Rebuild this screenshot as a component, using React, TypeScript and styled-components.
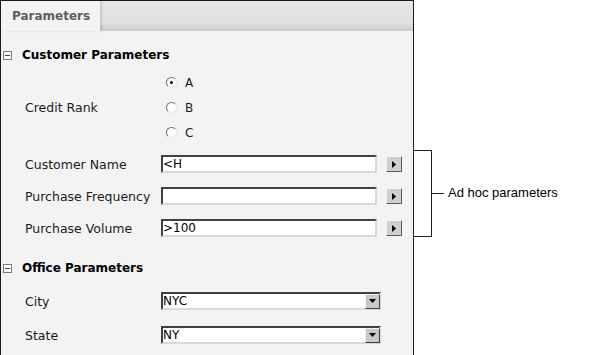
import React from "react";
import styled, { createGlobalStyle } from "styled-components";

const Global = createGlobalStyle`
  html, body { margin: 0; padding: 0; background: #ffffff; }
  body { font-family: "DejaVu Sans", Verdana, sans-serif; }
`;

const Page = styled.div`
  display: flex;
  align-items: flex-start;
  width: 613px;
  height: 355px;
  overflow: hidden;
`;

const Panel = styled.div`
  width: 412px;
  height: 360px;
  border: 1px solid #1a1a1a;
  border-bottom: none;
  background: #f3f3f3;
  display: flex;
  flex-direction: column;
  flex-shrink: 0;
`;

const TabBar = styled.div`
  display: flex;
  height: 30px;
  background: linear-gradient(#e6e6e6 0px, #e0e0e0 22px, #d4d4d4 26px, #cbcbcb 30px);
`;

const Tab = styled.div`
  width: 99px;
  background: #f3f3f3;
  color: #5e5e5e;
  font-weight: bold;
  font-size: 12px;
  display: flex;
  align-items: center;
  padding-left: 11px;
  box-sizing: border-box;
  box-shadow: 2px 0 2px rgba(0, 0, 0, 0.12);
  position: relative;
  z-index: 1;
`;

const SectionHeader = styled.div<{ $top: number }>`
  display: flex;
  align-items: center;
  height: 24px;
  margin-top: ${(p) => p.$top}px;
  padding-left: 2px;
  font-weight: bold;
  font-size: 12px;
  color: #000;
  gap: 10px;
`;

const MinusBox = styled.span`
  width: 7px;
  height: 7px;
  border: 1px solid #7a7a7a;
  background: #fff;
  position: relative;
  &::after {
    content: "";
    position: absolute;
    left: 1px;
    right: 1px;
    top: 3px;
    height: 1px;
    background: #444;
  }
`;

const FormRow = styled.div<{ $h: number }>`
  display: grid;
  grid-template-columns: 136px 1fr;
  align-items: center;
  height: ${(p) => p.$h}px;
  padding-left: 24px;
  font-size: 12px;
  color: #1a1a1a;
`;

const Label = styled.span`
  white-space: nowrap;
  font-size: 12.5px;
`;

const RadioGroup = styled.div`
  display: flex;
  flex-direction: column;
`;

const RadioRow = styled.div`
  display: flex;
  align-items: center;
  height: 25px;
  padding-left: 5px;
  gap: 8px;
  font-size: 12px;
`;

const RadioCircle = styled.span<{ $on?: boolean }>`
  width: 9px;
  height: 9px;
  border-radius: 50%;
  border: 1px solid;
  border-color: #6f6f6f #e8e8e8 #e8e8e8 #6f6f6f;
  background: #fff;
  display: flex;
  align-items: center;
  justify-content: center;
  &::after {
    content: "";
    width: 3px;
    height: 3px;
    border-radius: 50%;
    background: ${(p) => (p.$on ? "#000" : "transparent")};
  }
`;

const Control = styled.div`
  display: flex;
  align-items: center;
  gap: 9px;
`;

const TextBox = styled.div`
  width: 212px;
  height: 14px;
  border: 2px solid;
  border-color: #404040 #d8d8d8 #d8d8d8 #404040;
  background: #fff;
  font-size: 12px;
  line-height: 14px;
  color: #000;
`;

const ArrowButton = styled.div`
  width: 14px;
  height: 14px;
  border: 1px solid;
  border-color: #f6f6f6 #5a5a5a #5a5a5a #f6f6f6;
  background: #cfcfcf;
  display: flex;
  align-items: center;
  justify-content: center;
`;

const Select = styled.div`
  width: 216px;
  height: 14px;
  border: 2px solid;
  border-color: #404040 #d8d8d8 #d8d8d8 #404040;
  background: #fff;
  display: flex;
  align-items: center;
  justify-content: space-between;
  font-size: 12px;
  color: #000;
`;

const SelectButton = styled.div`
  width: 13px;
  height: 13px;
  border: 1px solid;
  border-color: #f2f2f2 #404040 #404040 #f2f2f2;
  background: #c8c8c8;
  display: flex;
  align-items: center;
  justify-content: center;
  margin-right: -1px;
`;

const Annotation = styled.div`
  display: flex;
  align-items: center;
  margin-top: 150px;
`;

const Bracket = styled.div`
  width: 17px;
  height: 85px;
  border: 1px solid #222;
  border-left: none;
`;

const Tick = styled.div`
  width: 12px;
  height: 1px;
  background: #222;
  margin-right: 4px;
`;

const AnnotationText = styled.span`
  font-family: "Liberation Sans", Arial, sans-serif;
  font-size: 13px;
  color: #000;
  margin-top: -2px;
`;

const RightTri = () => (
  <svg width="4" height="7" viewBox="0 0 4 7">
    <path d="M0 0 L4 3.5 L0 7 Z" fill="#000" />
  </svg>
);

const DownTri = () => (
  <svg width="7" height="4" viewBox="0 0 7 4">
    <path d="M0 0 L7 0 L3.5 4 Z" fill="#000" />
  </svg>
);

const adHoc = [
  { label: "Customer Name", value: "<H" },
  { label: "Purchase Frequency", value: "" },
  { label: "Purchase Volume", value: ">100" },
];

const selects = [
  { label: "City", value: "NYC" },
  { label: "State", value: "NY" },
];

export default function App() {
  return (
    <>
      <Global />
      <Page>
        <Panel>
          <TabBar>
            <Tab>Parameters</Tab>
          </TabBar>
          <SectionHeader $top={12}>
            <MinusBox />
            Customer Parameters
          </SectionHeader>
          <FormRow $h={75} style={{ marginTop: 3 }}>
            <Label>Credit Rank</Label>
            <RadioGroup>
              {["A", "B", "C"].map((l, i) => (
                <RadioRow key={l}>
                  <RadioCircle $on={i === 0} />
                  {l}
                </RadioRow>
              ))}
            </RadioGroup>
          </FormRow>
          <div style={{ height: 3 }} />
          {adHoc.map((r) => (
            <FormRow $h={32} key={r.label}>
              <Label>{r.label}</Label>
              <Control>
                <TextBox>{r.value}</TextBox>
                <ArrowButton>
                  <RightTri />
                </ArrowButton>
              </Control>
            </FormRow>
          ))}
          <SectionHeader $top={12}>
            <MinusBox />
            Office Parameters
          </SectionHeader>
          <div style={{ height: 4 }} />
          {selects.map((r) => (
            <FormRow $h={34} key={r.label}>
              <Label>{r.label}</Label>
              <Control>
                <Select>
                  {r.value}
                  <SelectButton>
                    <DownTri />
                  </SelectButton>
                </Select>
              </Control>
            </FormRow>
          ))}
        </Panel>
        <Annotation>
          <Bracket />
          <Tick />
          <AnnotationText>Ad hoc parameters</AnnotationText>
        </Annotation>
      </Page>
    </>
  );
}
